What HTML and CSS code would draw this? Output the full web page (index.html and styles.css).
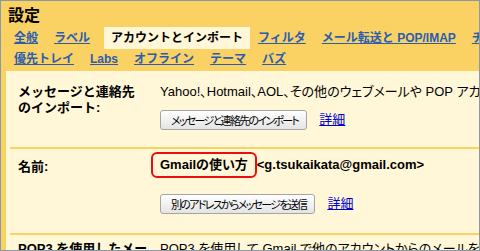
FILE: index.html
```html
<!DOCTYPE html>
<html lang="ja">
<head>
    <meta charset="UTF-8">
    <title>設定 - アカウントとインポート</title>
    <link rel="stylesheet" href="styles.css">
</head>
<body>
    <div class="frame">
        <div class="title">設定</div>

        <!-- settings tabs -->
        <div class="tabs">
            <a href="#" class="tab">全般</a>
            <a href="#" class="tab">ラベル</a>
            <span class="tab active">アカウントとインポート</span>
            <a href="#" class="tab">フィルタ</a>
            <a href="#" class="tab">メール転送と POP/IMAP</a>
            <a href="#" class="tab">チャット</a>
        </div>
        <div class="tabs tabs-second">
            <a href="#" class="tab">優先トレイ</a>
            <a href="#" class="tab">Labs</a>
            <a href="#" class="tab">オフライン</a>
            <a href="#" class="tab">テーマ</a>
            <a href="#" class="tab">バズ</a>
        </div>

        <div class="panel">
            <div class="row row-import">
                <div class="label">メッセージと連絡先のインポート:</div>
                <div class="value">
                    <div class="desc">Yahoo!、Hotmail、AOL、その他のウェブメールや POP アカウントからメールと連絡先をインポートします。</div>
                    <div class="actions">
                        <button type="button">メッセージと連絡先のインポート</button>
                        <a href="#" class="more">詳細</a>
                    </div>
                </div>
            </div>

            <div class="row row-name">
                <div class="label">名前:</div>
                <div class="value">
                    <div class="name-line">
                        <span class="name-box">Gmailの使い方</span><span class="address">&lt;g.tsukaikata@gmail.com&gt;</span>
                    </div>
                    <div class="actions">
                        <button type="button">別のアドレスからメッセージを送信</button>
                        <a href="#" class="more">詳細</a>
                    </div>
                </div>
            </div>

            <div class="row row-pop">
                <div class="label">POP3 を使用したメールの確認:</div>
                <div class="value">
                    <div class="desc">POP3 を使用して Gmail で他のアカウントからのメールを確認します。</div>
                </div>
            </div>
        </div>
    </div>
</body>
</html>
```

FILE: styles.css
```css
body {
    margin: 0;
    font-family: "Liberation Sans", "Noto Sans CJK JP", sans-serif;
    font-size: 13px;
    color: #000;
}
.frame {
    display: flex;
    flex-direction: column;
    height: 251px;
    box-sizing: border-box;
    border: 1px solid #8b98a5;
    background-color: #fad163;
    overflow: hidden;
}
.title {
    padding: 4px 0 0 7px;
    font-size: 16px;
    font-weight: bold;
    line-height: 22px;
}
.tabs {
    display: flex;
    padding-left: 5px;
    white-space: nowrap;
}
.tab {
    padding: 3px 8px;
    font-size: 12px;
    font-weight: bold;
    line-height: 16px;
    color: #2a5db0;
    text-decoration: underline;
}
.tab.active {
    margin-left: 6px;
    padding: 3px 7px;
    background-color: #fff7d7;
    color: #000;
    text-decoration: none;
}
.tabs-second {
    padding-top: 2px;
    padding-bottom: 4px;
}
.tabs-second .tab {
    padding-top: 0;
    padding-bottom: 0;
}
.panel {
    flex: 1;
    margin-left: 5px;
    background-color: #fff7d7;
}
.row {
    display: grid;
    grid-template-columns: 142px 1fr;
    margin-left: 4px;
    padding-left: 8px;
    border-bottom: 2px solid #fad163;
    line-height: 16px;
}
.label {
    width: 129.5px;
    font-weight: bold;
}
.value {
    min-width: 0;
    white-space: nowrap;
}
.desc {
    font-feature-settings: "palt";
}
.row-import {
    padding-top: 13px;
    padding-bottom: 17px;
}
.row-name {
    padding-top: 3px;
    padding-bottom: 19px;
}
.row-name .label {
    padding-top: 7px;
}
.row-pop {
    padding-top: 6px;
}
.actions {
    display: flex;
    align-items: center;
    margin-top: 10px;
}
.row-name .actions {
    margin-top: 16px;
}
button {
    height: 20px;
    padding: 0 8px 0 10px;
    font-family: "Liberation Sans", "Noto Sans CJK JP", sans-serif;
    font-size: 11px;
    letter-spacing: -1.7px;
    font-feature-settings: "palt";
    color: #000;
    background: linear-gradient(#ffffff, #e4e4e4);
    border: 1px solid #a5a5a5;
    border-radius: 3px;
}
.more {
    margin-left: 12px;
    color: #0000cc;
    text-decoration: underline;
}
.name-line {
    display: flex;
    align-items: center;
    font-weight: bold;
}
.name-box {
    margin-left: -9px;
    padding: 3px 7px;
    border: 2px solid #e8100c;
    border-radius: 6px;
    font-feature-settings: "palt";
}
```
